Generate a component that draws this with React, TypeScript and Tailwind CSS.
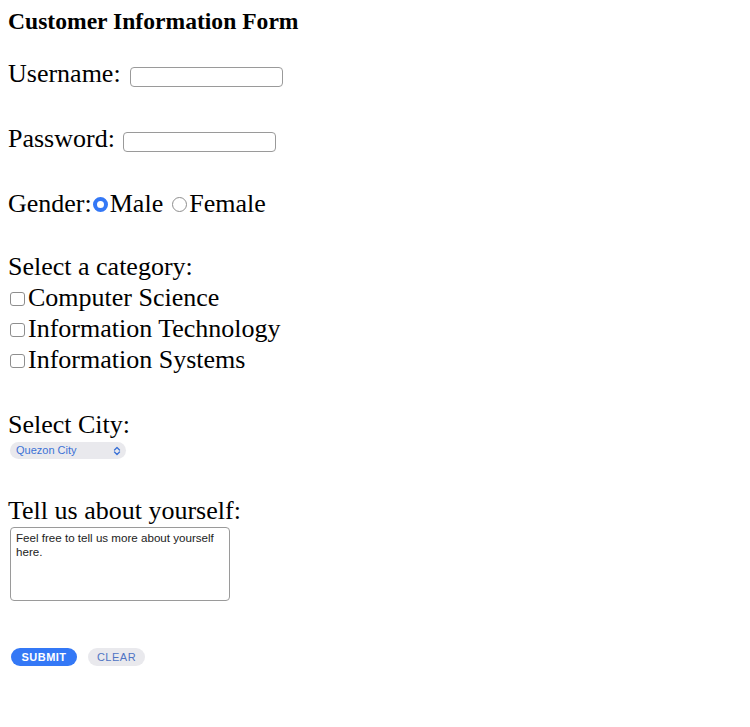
import React, { useState } from 'react';

const serif = "font-['Liberation_Serif','Times_New_Roman',serif]";
const sans = "font-['Liberation_Sans',Arial,sans-serif]";

const App = () => {
  const [gender, setGender] = useState('male');
  const [about, setAbout] = useState('Feel free to tell us more about yourself here.');

  return (
    <div className={`${serif} bg-white text-black min-h-[727px] pl-2`}>
      <h3 className="pt-[6px] text-[23.6px] leading-[31px] font-bold">Customer Information Form</h3>

      <div className="mt-[21px] flex items-start text-[26px] leading-[31px]">
        <span>Username:</span>
        <input
          type="text"
          className="ml-[9px] mt-[9px] h-[20px] w-[153px] rounded-[4px] border border-[#9a9a9a] bg-white"
        />
      </div>

      <div className="mt-[34px] flex items-start text-[26px] leading-[31px]">
        <span>Password:</span>
        <input
          type="password"
          className="ml-[8px] mt-[9px] h-[20px] w-[153px] rounded-[4px] border border-[#9a9a9a] bg-white"
        />
      </div>

      <div className="mt-[34px] flex items-center text-[26px] leading-[31px]">
        <span>Gender:</span>
        <button
          onClick={() => setGender('male')}
          className={`ml-[1px] mr-[2px] mt-[2px] h-[15px] w-[15px] rounded-full ${
            gender === 'male' ? 'border-[4px] border-[#3478f6] bg-white' : 'border border-[#8e8e8e] bg-white'
          }`}
        />
        <span>Male</span>
        <button
          onClick={() => setGender('female')}
          className={`ml-[9px] mr-[2px] mt-[2px] h-[15px] w-[15px] rounded-full ${
            gender === 'female' ? 'border-[4px] border-[#3478f6] bg-white' : 'border border-[#8e8e8e] bg-white'
          }`}
        />
        <span>Female</span>
      </div>

      <div className="mt-[32px] text-[26px] leading-[31px]">
        <div>Select a category:</div>
        {['Computer Science', 'Information Technology', 'Information Systems'].map((c) => (
          <label key={c} className="flex items-center">
            <span className="ml-[2px] mr-[3px] mt-[3px] h-[14px] w-[15px] rounded-[3px] border border-[#8e8e8e] bg-white" />
            <span>{c}</span>
          </label>
        ))}
      </div>

      <div className="mt-[34px] text-[26px] leading-[31px]">Select City:</div>
      <div
        className={`${sans} ml-[2px] mt-[2px] flex h-[17px] w-[116px] items-center justify-between rounded-full bg-[#e9e9ed] pl-[6px] pr-[5px] text-[11px] text-[#3c72d6]`}
      >
        <span>Quezon City</span>
        <svg width="8" height="10" viewBox="0 0 8 10" fill="none" stroke="#3c72d6" strokeWidth="1.4" strokeLinecap="round" strokeLinejoin="round">
          <path d="M1.5 4 L4 1.5 L6.5 4" />
          <path d="M1.5 6 L4 8.5 L6.5 6" />
        </svg>
      </div>

      <div className="mt-[36px] text-[26px] leading-[31px]">Tell us about yourself:</div>
      <textarea
        value={about}
        onChange={(e) => setAbout(e.target.value)}
        className={`${sans} ml-[2px] mt-[1px] block h-[74px] w-[220px] resize-none rounded-[4px] border border-[#9a9a9a] px-[5px] py-[3px] text-[11.6px] leading-[14px] text-[#222]`}
      />

      <div className={`${sans} mt-[47px] flex items-center`}>
        <button className="ml-[3px] h-[18px] w-[66px] rounded-full bg-[#3478f6] text-[11px] font-bold tracking-[0.5px] text-white">
          SUBMIT
        </button>
        <button className="ml-[11px] h-[18px] w-[57px] rounded-full bg-[#e9e9ed] text-[11px] tracking-[0.5px] text-[#4f74c4]">
          CLEAR
        </button>
      </div>
    </div>
  );
};

export default App;
